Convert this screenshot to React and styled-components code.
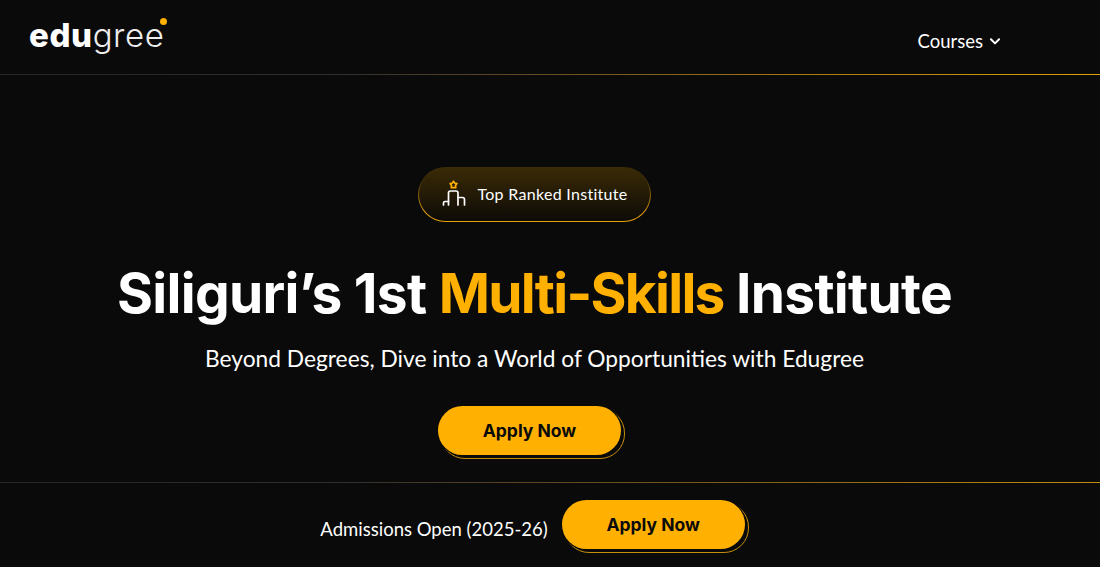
import React from "react";
import styled, { createGlobalStyle } from "styled-components";

const Global = createGlobalStyle`
  html, body { margin: 0; padding: 0; background: #0a0a0a; height: 100%; overflow: hidden; }
  * { box-sizing: border-box; }
  body { font-family: "Lato", "Liberation Sans", sans-serif; color: #fff; }
`;

const Page = styled.div`
  width: 1100px;
  height: 567px;
  display: flex;
  flex-direction: column;
  background: #0a0a0a;
`;

const Header = styled.header`
  height: 75px;
  display: flex;
  align-items: flex-start;
  justify-content: space-between;
  padding: 16px 98px 0 29px;
  border-bottom: 1px solid transparent;
  border-image: linear-gradient(90deg, #262626 0%, #2e2e2e 30%, #5a4526 45%, #a87812 72%, #e0a208 100%) 1;
`;

const Logo = styled.div`
  position: relative;
  font-family: "Inter", sans-serif;
  font-size: 33px;
  line-height: 39px;
  letter-spacing: 0.6px;
  font-weight: 800;
  color: #fff;
`;

const LogoLight = styled.span`
  font-weight: 300;
  color: #eee;
`;

const LogoDot = styled.span`
  position: absolute;
  top: 2px;
  right: -2px;
  width: 7px;
  height: 7px;
  border-radius: 50%;
  background: #ffb000;
`;

const Nav = styled.nav`
  display: flex;
  align-items: center;
  gap: 5px;
  height: 50px;
  font-size: 18.5px;
  font-weight: 400;
`;

const Hero = styled.main`
  height: 407px;
  padding: 92px 31px 0 0;
  display: flex;
  flex-direction: column;
  align-items: center;
`;

const Badge = styled.div`
  width: 233px;
  height: 55px;
  display: flex;
  align-items: center;
  justify-content: center;
  gap: 10px;
  padding-bottom: 3px;
  border-radius: 28px;
  border: 1.5px solid transparent;
  background:
    linear-gradient(180deg, #3a2a06 0%, #0d0b07 100%) padding-box,
    linear-gradient(180deg, #3a2a06 0%, #3a2a06 25%, #e8a208 85%) border-box;
  font-size: 16px;
  letter-spacing: 0.3px;
`;

const Title = styled.h1`
  margin: 40px 0 0;
  font-family: "Inter", sans-serif;
  font-size: 55px;
  line-height: 62px;
  font-weight: 700;
  letter-spacing: -0.7px;
  white-space: nowrap;
`;

const Accent = styled.span`
  color: #ffb000;
  letter-spacing: -1.7px;
`;

const Subtitle = styled.p`
  margin: 20px 0 0;
  font-size: 22.75px;
  line-height: 30px;
  font-weight: 400;
  white-space: nowrap;
`;

const ApplyWrap = styled.div`
  position: relative;
  isolation: isolate;
  display: inline-flex;
  margin-top: ${(p) => p.$top}px;
  margin-right: ${(p) => p.$right}px;
  &::before {
    content: "";
    position: absolute;
    z-index: -1;
    left: 2px;
    top: 2px;
    right: -4px;
    bottom: -4px;
    border-radius: 25px;
    border: 1.5px solid #c48e0a;
  }
`;

const Apply = styled.button`
  width: 183px;
  height: 49px;
  border: none;
  border-radius: 25px;
  background: #ffb000;
  box-shadow: 0 0 0 1px #0a0a0a;
  color: #0a0a0a;
  font-family: "Inter", sans-serif;
  font-size: 17.5px;
  font-weight: 700;
`;

const Footer = styled.footer`
  flex: 1;
  padding: 17px 31px 0 0;
  display: flex;
  align-items: flex-start;
  justify-content: center;
  gap: 14px;
  border-top: 1px solid transparent;
  border-image: linear-gradient(90deg, #262626 0%, #2e2e2e 30%, #554224 45%, #8a6616 72%, #c48e0c 100%) 1;
`;

const FooterText = styled.span`
  font-size: 18.5px;
  line-height: 58px;
`;

export default function App() {
  return (
    <Page>
      <Global />
      <Header>
        <Logo>
          edu<LogoLight>gree</LogoLight>
          <LogoDot />
        </Logo>
        <Nav>
          Courses
          <svg width="14" height="14" viewBox="0 0 24 24" fill="none" stroke="#fff" strokeWidth="3.4" strokeLinecap="round" strokeLinejoin="round">
            <path d="M5 9l7 7 7-7" />
          </svg>
        </Nav>
      </Header>
      <Hero>
        <Badge>
          <svg width="26" height="26" viewBox="0 0 26 26" fill="none" stroke="#fff" strokeWidth="1.7" strokeLinecap="round" strokeLinejoin="round">
            <path d="M12.5 1.200l1.200 1.900 2.200.5-1.400 1.800.2 2.300h-4.400l.2-2.300-1.400-1.800 2.200-.5z" stroke="#ffb000" />
            <path d="M7.500 25V13a2 2 0 0 1 2-2h5.500a2 2 0 0 1 2 2v12" />
            <path d="M2.500 25v-2a1.500 1.500 0 0 1 1.500-1.500h3.500M17 17.500h4.500a2 2 0 0 1 2 2V25" />
          </svg>
          Top Ranked Institute
        </Badge>
        <Title>
          Siliguri’s 1st <Accent>Multi-Skills</Accent> Institute
        </Title>
        <Subtitle>Beyond Degrees, Dive into a World of Opportunities with Edugree</Subtitle>
        <ApplyWrap $top={32} $right={10}>
          <Apply>Apply Now</Apply>
        </ApplyWrap>
      </Hero>
      <Footer>
        <FooterText>Admissions Open (2025-26)</FooterText>
        <ApplyWrap $top={0} $right={4}>
          <Apply>Apply Now</Apply>
        </ApplyWrap>
      </Footer>
    </Page>
  );
}
